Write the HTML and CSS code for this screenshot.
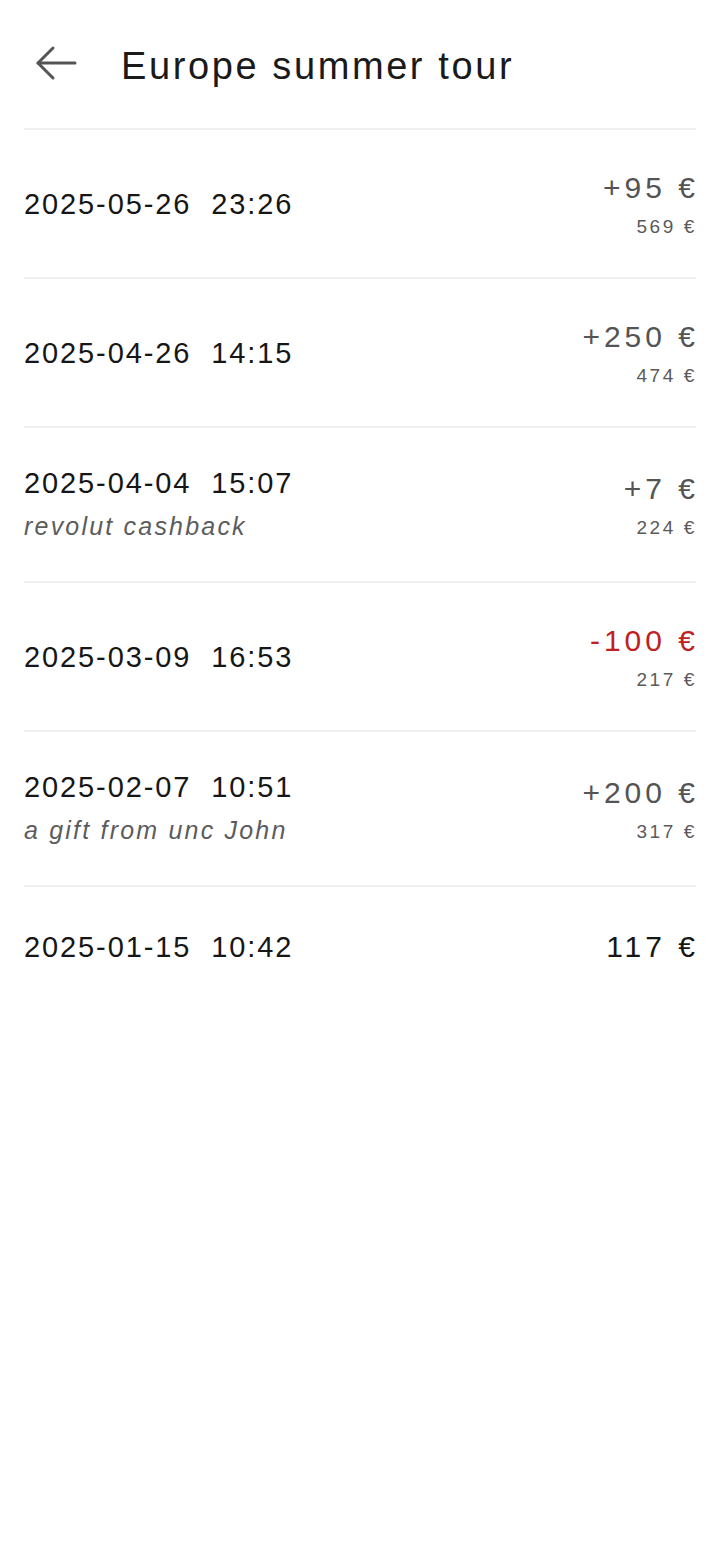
FILE: index.html
```html
<!DOCTYPE html>
<html lang="en">
<head>
    <meta charset="UTF-8">
    <meta name="viewport" content="width=device-width, initial-scale=1.0">
    <title>Europe summer tour</title>
    <link rel="stylesheet" href="styles.css">
</head>
<body>
    <header class="topbar">
        <button class="back" aria-label="Back">
            <svg width="48" height="48" viewBox="0 0 48 48" fill="none" stroke="#555" stroke-width="3" stroke-linecap="round" stroke-linejoin="round">
                <path d="M6 29H43"/>
                <path d="M21 14L6 29L21 44"/>
            </svg>
        </button>
        <h1>Europe summer tour</h1>
    </header>
    <ul class="history">
        <li class="entry">
            <div class="when">
                <div class="date">2025-05-26&nbsp; 23:26</div>
            </div>
            <div class="money">
                <div class="amount">+95 €</div>
                <div class="balance">569 €</div>
            </div>
        </li>
        <li class="entry">
            <div class="when">
                <div class="date">2025-04-26&nbsp; 14:15</div>
            </div>
            <div class="money">
                <div class="amount">+250 €</div>
                <div class="balance">474 €</div>
            </div>
        </li>
        <li class="entry">
            <div class="when">
                <div class="date">2025-04-04&nbsp; 15:07</div>
                <div class="note">revolut cashback</div>
            </div>
            <div class="money">
                <div class="amount">+7 €</div>
                <div class="balance">224 €</div>
            </div>
        </li>
        <li class="entry">
            <div class="when">
                <div class="date">2025-03-09&nbsp; 16:53</div>
            </div>
            <div class="money">
                <div class="amount negative">-100 €</div>
                <div class="balance">217 €</div>
            </div>
        </li>
        <li class="entry">
            <div class="when">
                <div class="date">2025-02-07&nbsp; 10:51</div>
                <div class="note">a gift from unc John</div>
            </div>
            <div class="money">
                <div class="amount">+200 €</div>
                <div class="balance">317 €</div>
            </div>
        </li>
        <li class="entry">
            <div class="when">
                <div class="date">2025-01-15&nbsp; 10:42</div>
            </div>
            <div class="money">
                <div class="amount start">117 €</div>
            </div>
        </li>
    </ul>
</body>
</html>
```

FILE: styles.css
```css
body {
    margin: 0;
    background-color: #fff;
    font-family: "Liberation Sans", Arial, sans-serif;
    color: #161616;
}
.topbar {
    display: flex;
    align-items: center;
    height: 128px;
    padding-left: 32px;
    box-sizing: border-box;
}
.back {
    display: flex;
    padding: 0;
    border: none;
    background: none;
    width: 48px;
    height: 48px;
    margin-top: -12px;
    cursor: pointer;
}
.topbar h1 {
    margin: 0 0 0 41px;
    font-size: 38px;
    font-weight: normal;
    letter-spacing: 2.6px;
    color: #1a1a1a;
    position: relative;
    top: 2px;
}
.history {
    list-style: none;
    margin: 0 24px;
    padding: 0;
}
.entry {
    display: flex;
    justify-content: space-between;
    align-items: center;
    padding: 40px 0;
    border-top: 2px solid #efefef;
}
.entry:last-child {
    padding-top: 42px;
}
.date {
    font-size: 29px;
    line-height: 30px;
    letter-spacing: 1.9px;
    color: #161616;
}
.note {
    margin-top: 13px;
    font-size: 25px;
    line-height: 30px;
    font-style: italic;
    letter-spacing: 2.2px;
    color: #5c5c5c;
}
.money {
    text-align: right;
}
.amount {
    font-size: 30px;
    line-height: 36px;
    letter-spacing: 4px;
    color: #545454;
    margin-right: -3px;
}
.amount.negative {
    color: #c0201f;
}
.amount.start {
    color: #161616;
}
.balance {
    margin-top: 11px;
    margin-right: -1px;
    font-size: 19px;
    line-height: 20px;
    letter-spacing: 2.6px;
    color: #5a5a5a;
}
```
